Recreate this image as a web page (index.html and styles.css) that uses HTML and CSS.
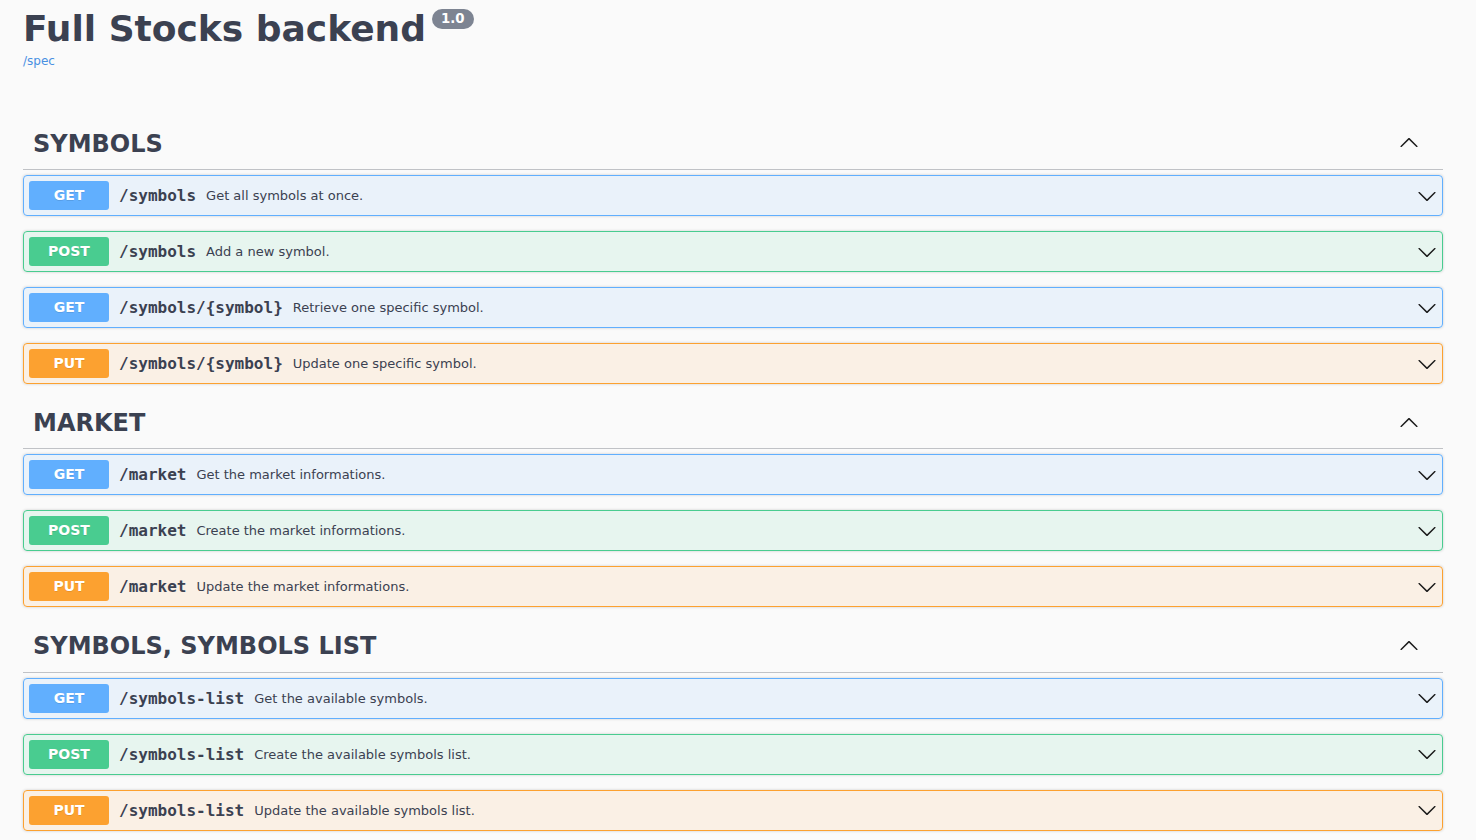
FILE: index.html
```html
<!DOCTYPE html>
<html lang="en">
<head>
<meta charset="utf-8">
<title>Full Stocks backend</title>
<link rel="stylesheet" href="styles.css">
</head>
<body>
<div class="page">
  <div class="info">
    <h2 class="title">Full Stocks backend<span class="version">1.0</span></h2>
    <a class="spec-link" href="#">/spec</a>
  </div>

  <div class="tags">
    <section class="tag-section">
      <h3 class="tag">
        <span class="tag-name">SYMBOLS</span>
        <span class="toggle"><svg class="arrow up" width="20" height="20" viewBox="0 0 20 20"><path d="M17.418 6.109c.272-.268.709-.268.979 0s.271.701 0 .969l-7.908 7.83c-.27.268-.707.268-.979 0l-7.908-7.830c-.27-.268-.27-.701 0-.969.271-.268.709-.268.979 0L10 13.25l7.418-7.141z"/></svg></span>
      </h3>
      <div class="op get"><span class="method">GET</span><span class="path">/symbols</span><span class="desc">Get all symbols at once.</span><svg class="arrow" width="20" height="20" viewBox="0 0 20 20"><path d="M17.418 6.109c.272-.268.709-.268.979 0s.271.701 0 .969l-7.908 7.83c-.27.268-.707.268-.979 0l-7.908-7.83c-.27-.268-.27-.701 0-.969.271-.268.709-.268.979 0L10 13.25l7.418-7.141z"/></svg></div>
      <div class="op post"><span class="method">POST</span><span class="path">/symbols</span><span class="desc">Add a new symbol.</span><svg class="arrow" width="20" height="20" viewBox="0 0 20 20"><path d="M17.418 6.109c.272-.268.709-.268.979 0s.271.701 0 .969l-7.908 7.83c-.27.268-.707.268-.979 0l-7.908-7.83c-.27-.268-.27-.701 0-.969.271-.268.709-.268.979 0L10 13.25l7.418-7.141z"/></svg></div>
      <div class="op get"><span class="method">GET</span><span class="path">/symbols/{symbol}</span><span class="desc">Retrieve one specific symbol.</span><svg class="arrow" width="20" height="20" viewBox="0 0 20 20"><path d="M17.418 6.109c.272-.268.709-.268.979 0s.271.701 0 .969l-7.908 7.83c-.27.268-.707.268-.979 0l-7.908-7.83c-.27-.268-.27-.701 0-.969.271-.268.709-.268.979 0L10 13.25l7.418-7.141z"/></svg></div>
      <div class="op put"><span class="method">PUT</span><span class="path">/symbols/{symbol}</span><span class="desc">Update one specific symbol.</span><svg class="arrow" width="20" height="20" viewBox="0 0 20 20"><path d="M17.418 6.109c.272-.268.709-.268.979 0s.271.701 0 .969l-7.908 7.83c-.27.268-.707.268-.979 0l-7.908-7.83c-.27-.268-.27-.701 0-.969.271-.268.709-.268.979 0L10 13.25l7.418-7.141z"/></svg></div>
    </section>

    <section class="tag-section">
      <h3 class="tag">
        <span class="tag-name">MARKET</span>
        <span class="toggle"><svg class="arrow up" width="20" height="20" viewBox="0 0 20 20"><path d="M17.418 6.109c.272-.268.709-.268.979 0s.271.701 0 .969l-7.908 7.83c-.27.268-.707.268-.979 0l-7.908-7.83c-.27-.268-.27-.701 0-.969.271-.268.709-.268.979 0L10 13.25l7.418-7.141z"/></svg></span>
      </h3>
      <div class="op get"><span class="method">GET</span><span class="path">/market</span><span class="desc">Get the market informations.</span><svg class="arrow" width="20" height="20" viewBox="0 0 20 20"><path d="M17.418 6.109c.272-.268.709-.268.979 0s.271.701 0 .969l-7.908 7.83c-.27.268-.707.268-.979 0l-7.908-7.83c-.27-.268-.27-.701 0-.969.271-.268.709-.268.979 0L10 13.25l7.418-7.141z"/></svg></div>
      <div class="op post"><span class="method">POST</span><span class="path">/market</span><span class="desc">Create the market informations.</span><svg class="arrow" width="20" height="20" viewBox="0 0 20 20"><path d="M17.418 6.109c.272-.268.709-.268.979 0s.271.701 0 .969l-7.908 7.83c-.27.268-.707.268-.979 0l-7.908-7.83c-.27-.268-.27-.701 0-.969.271-.268.709-.268.979 0L10 13.25l7.418-7.141z"/></svg></div>
      <div class="op put"><span class="method">PUT</span><span class="path">/market</span><span class="desc">Update the market informations.</span><svg class="arrow" width="20" height="20" viewBox="0 0 20 20"><path d="M17.418 6.109c.272-.268.709-.268.979 0s.271.701 0 .969l-7.908 7.83c-.27.268-.707.268-.979 0l-7.908-7.83c-.27-.268-.27-.701 0-.969.271-.268.709-.268.979 0L10 13.25l7.418-7.141z"/></svg></div>
    </section>

    <section class="tag-section">
      <h3 class="tag">
        <span class="tag-name">SYMBOLS, SYMBOLS LIST</span>
        <span class="toggle"><svg class="arrow up" width="20" height="20" viewBox="0 0 20 20"><path d="M17.418 6.109c.272-.268.709-.268.979 0s.271.701 0 .969l-7.908 7.83c-.27.268-.707.268-.979 0l-7.908-7.83c-.27-.268-.27-.701 0-.969.271-.268.709-.268.979 0L10 13.25l7.418-7.141z"/></svg></span>
      </h3>
      <div class="op get"><span class="method">GET</span><span class="path">/symbols-list</span><span class="desc">Get the available symbols.</span><svg class="arrow" width="20" height="20" viewBox="0 0 20 20"><path d="M17.418 6.109c.272-.268.709-.268.979 0s.271.701 0 .969l-7.908 7.83c-.27.268-.707.268-.979 0l-7.908-7.83c-.27-.268-.27-.701 0-.969.271-.268.709-.268.979 0L10 13.25l7.418-7.141z"/></svg></div>
      <div class="op post"><span class="method">POST</span><span class="path">/symbols-list</span><span class="desc">Create the available symbols list.</span><svg class="arrow" width="20" height="20" viewBox="0 0 20 20"><path d="M17.418 6.109c.272-.268.709-.268.979 0s.271.701 0 .969l-7.908 7.83c-.27.268-.707.268-.979 0l-7.908-7.83c-.27-.268-.27-.701 0-.969.271-.268.709-.268.979 0L10 13.25l7.418-7.141z"/></svg></div>
      <div class="op put"><span class="method">PUT</span><span class="path">/symbols-list</span><span class="desc">Update the available symbols list.</span><svg class="arrow" width="20" height="20" viewBox="0 0 20 20"><path d="M17.418 6.109c.272-.268.709-.268.979 0s.271.701 0 .969l-7.908 7.83c-.27.268-.707.268-.979 0l-7.908-7.83c-.27-.268-.27-.701 0-.969.271-.268.709-.268.979 0L10 13.25l7.418-7.141z"/></svg></div>
    </section>
  </div>
</div>
</body>
</html>
```

FILE: styles.css
```css
html, body {
  margin: 0;
  padding: 0;
  background: #fafafa;
}

body {
  font-family: "DejaVu Sans", sans-serif;
  color: #3b4151;
}

.page {
  padding: 8px 33px 40px 23px;
}

.info {
  display: flex;
  flex-direction: column;
  align-items: flex-start;
}

.title {
  margin: 0;
  display: flex;
  align-items: flex-start;
  font-size: 36px;
  line-height: 42px;
  font-weight: bold;
  color: #3b4151;
}

.version {
  margin: 1px 0 0 6px;
  padding: 2px 9px;
  border-radius: 57px;
  background: #7d8492;
  color: #fff;
  font-size: 13.33px;
  line-height: 16px;
  font-weight: bold;
}

.spec-link {
  margin-top: 4px;
  font-size: 12px;
  line-height: 14px;
  color: #4990e2;
  text-decoration: none;
}

.tags {
  margin-top: 51.6px;
}

.tag {
  display: flex;
  align-items: center;
  margin: 0 0 5px;
  padding: 10px 24px 10px 10px;
  border-bottom: 1px solid rgba(59, 65, 81, 0.3);
  font-size: 24px;
  line-height: 29.4px;
  font-weight: bold;
  color: #3b4151;
}

.tag-name {
  flex: 1 1 auto;
}

.toggle {
  display: flex;
  align-items: center;
  height: 29px;
  padding-bottom: 2px;
  box-sizing: border-box;
}

.arrow {
  display: block;
  fill: #1b1b1b;
  flex: none;
}

.arrow.up {
  transform: rotate(180deg);
}

.op {
  display: flex;
  align-items: center;
  margin: 0 0 15px;
  padding: 5px;
  border: 1px solid;
  border-radius: 4px;
  box-shadow: 0 0 3px rgba(0, 0, 0, 0.19);
}

.method {
  flex: none;
  width: 80px;
  padding: 6px 0;
  border-radius: 3px;
  text-align: center;
  font-size: 14px;
  line-height: 17px;
  font-weight: bold;
  color: #fff;
  text-shadow: 0 1px 0 rgba(0, 0, 0, 0.1);
}

.path {
  padding: 0 10px;
  font-family: "DejaVu Sans Mono", monospace;
  font-size: 16px;
  font-weight: bold;
  color: #3b4151;
}

.desc {
  flex: 1 1 auto;
  font-size: 13px;
  color: #3b4151;
}

.get {
  border-color: #61affe;
  background: rgba(97, 175, 254, 0.1);
}
.get .method { background: #61affe; }

.post {
  border-color: #49cc90;
  background: rgba(73, 204, 144, 0.1);
}
.post .method { background: #49cc90; }

.put {
  border-color: #fca130;
  background: rgba(252, 161, 48, 0.1);
}
.put .method { background: #fca130; }
```
